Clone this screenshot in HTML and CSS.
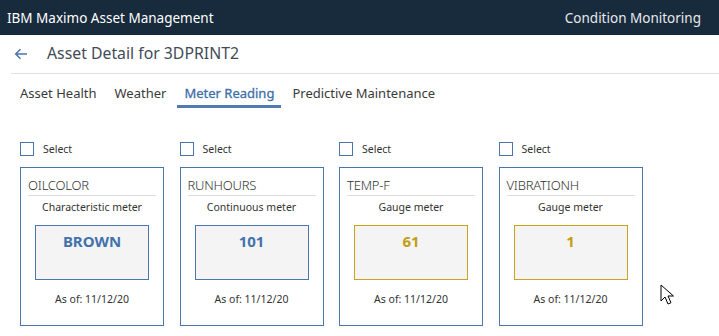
FILE: index.html
```html
<!DOCTYPE html>
<html lang="en">
  <head>
    <meta charset="UTF-8" />
    <meta name="viewport" content="width=device-width, initial-scale=1.0" />
    <title>Condition Monitoring</title>
    <link rel="stylesheet" href="styles.css">
  </head>
  <body>
    <div class="topbar">
      <span class="product">IBM Maximo Asset Management</span>
      <span class="app">Condition Monitoring</span>
    </div>

    <div class="title-row">
      <svg class="back" width="14" height="12" viewBox="0 0 14 12">
        <path d="M13 6H2M6.5 1.2L1.7 6l4.8 4.8" fill="none" stroke="#4a76ad" stroke-width="1.5" />
      </svg>
      <h1>Asset Detail for 3DPRINT2</h1>
    </div>

    <div class="tabs">
      <span class="tab">Asset Health</span>
      <span class="tab">Weather</span>
      <span class="tab active">Meter Reading</span>
      <span class="tab">Predictive Maintenance</span>
    </div>

    <div class="meters">
      <div class="meter">
        <label class="select"><span class="box"></span>Select</label>
        <div class="card">
          <div class="card-title">OILCOLOR</div>
          <div class="card-type">Characteristic meter</div>
          <div class="reading">BROWN</div>
          <div class="as-of">As of: 11/12/20</div>
        </div>
      </div>
      <div class="meter">
        <label class="select"><span class="box"></span>Select</label>
        <div class="card">
          <div class="card-title">RUNHOURS</div>
          <div class="card-type">Continuous meter</div>
          <div class="reading">101</div>
          <div class="as-of">As of: 11/12/20</div>
        </div>
      </div>
      <div class="meter">
        <label class="select"><span class="box"></span>Select</label>
        <div class="card">
          <div class="card-title">TEMP-F</div>
          <div class="card-type">Gauge meter</div>
          <div class="reading gauge">61</div>
          <div class="as-of">As of: 11/12/20</div>
        </div>
      </div>
      <div class="meter">
        <label class="select"><span class="box"></span>Select</label>
        <div class="card">
          <div class="card-title">VIBRATIONH</div>
          <div class="card-type">Gauge meter</div>
          <div class="reading gauge">1</div>
          <div class="as-of">As of: 11/12/20</div>
        </div>
      </div>
    </div>

    <svg class="cursor" width="14" height="22" viewBox="0 0 14 22">
      <path d="M1 1v16l4-4 3 7 3-1.3-3-6.7h5.5z" fill="#fff" stroke="#000" stroke-width="1" stroke-linejoin="round" />
    </svg>
  </body>
</html>
```

FILE: styles.css
```css
body {
  margin: 0;
  font-family: "Noto Sans", Arial, sans-serif;
  color: #333;
  background: #fff;
  width: 719px;
  height: 336px;
  overflow: hidden;
  position: relative;
}

.topbar {
  height: 35px;
  background-color: #182b3c;
  color: #fff;
  display: flex;
  align-items: center;
  justify-content: space-between;
  padding: 0 18px 0 7px;
  font-size: 13.5px;
}

.topbar .app {
  color: #e6e9ec;
}

.title-row {
  height: 38px;
  display: flex;
  align-items: center;
  margin-left: 11px;
  border-bottom: 1px solid #e0e0e0;
}

.back {
  margin: 0 19px 0 3px;
}

.title-row h1 {
  margin: -2px 0 0;
  font-size: 15.8px;
  font-weight: 400;
  color: #3f4b57;
}

.tabs {
  display: flex;
  gap: 4px;
  margin: 10px 0 0 13px;
}

.tab {
  padding: 0 7px 3px;
  font-size: 13px;
  color: #3a3a3a;
  border-bottom: 3px solid transparent;
}

.tab.active {
  color: #3f6fa9;
  border-bottom-color: #4f7bb1;
  -webkit-text-stroke: 0.3px #3f6fa9;
}

.meters {
  display: flex;
  gap: 15.5px;
  margin: 33px 0 0 20px;
}

.select {
  display: flex;
  align-items: center;
  height: 15px;
  font-size: 10.5px;
  color: #333;
}

.select .box {
  width: 12px;
  height: 12px;
  border: 1px solid #4a76ad;
  margin-right: 9px;
}

.card {
  width: 142px;
  height: 157px;
  margin-top: 11px;
  border: 1px solid #4a76ad;
  display: flex;
  flex-direction: column;
  align-items: center;
}

.card-title {
  align-self: stretch;
  margin: 8px 7px 0;
  padding-bottom: 1px;
  border-bottom: 1px solid #dcdcdc;
  font-size: 13px;
  font-weight: 300;
  color: #333;
  letter-spacing: -0.2px;
}

.card-type {
  margin-top: 4px;
  font-size: 10.5px;
  color: #333;
}

.reading {
  width: 112px;
  height: 53px;
  margin-top: 11px;
  border: 1px solid #4a76ad;
  background: #f4f4f4;
  text-align: center;
  font-size: 15px;
  font-weight: 700;
  color: #4272ab;
  line-height: 30px;
}

.reading.gauge {
  border-color: #c8a31c;
  color: #c29d17;
}

.as-of {
  margin-top: 12px;
  font-size: 10.5px;
  color: #333;
}

.cursor {
  position: absolute;
  left: 660px;
  top: 284px;
}
```
